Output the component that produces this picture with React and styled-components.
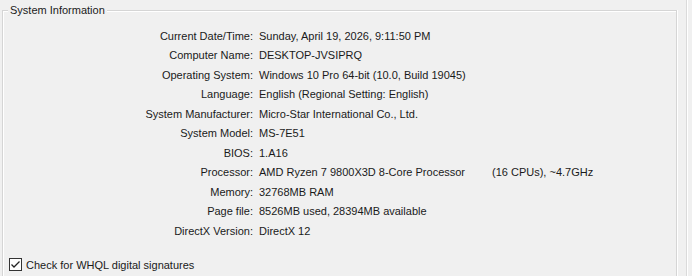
import React from "react";
import styled, { createGlobalStyle } from "styled-components";

const Global = createGlobalStyle`
  html, body { margin: 0; padding: 0; background: #f0f0f0; }
  body { font-family: "Liberation Sans", Arial, sans-serif; font-size: 11px; color: #000; }
`;

const Page = styled.div`
  width: 692px;
  height: 276px;
  overflow: hidden;
  display: flex;
  background: #f0f0f0;
`;

const Main = styled.div`
  width: 677px;
  padding: 10px 0 0 2px;
  box-sizing: border-box;
  position: relative;
`;

const Edge = styled.div`
  margin-left: 9px;
  width: 2px;
  border-left: 1px solid #dadada;
  border-right: 1px solid #ffffff;
  box-sizing: border-box;
`;

const Group = styled.div`
  margin: 0;
  padding: 15px 0 0 0;
  height: 300px;
  box-sizing: border-box;
  border-top: 1px solid #d5d5d5;
  border-left: 1px solid #d5d5d5;
  border-right: 1px solid #d5d5d5;
  box-shadow: inset 1px 1px 0 #ffffff, 1px 0 0 #ffffff;
  position: relative;
`;

const Legend = styled.span`
  position: absolute;
  left: 5px;
  top: -8px;
  padding: 0 2px;
  background: #f0f0f0;
  line-height: 14px;
  color: #1a1a1a;
`;

const Grid = styled.div`
  display: grid;
  grid-template-columns: 250px auto;
  column-gap: 6px;
  grid-auto-rows: 19.5px;
  align-items: center;
`;

const Label = styled.div`
  text-align: right;
  white-space: nowrap;
  color: #1a1a1a;
`;

const Value = styled.div`
  white-space: nowrap;
  color: #1a1a1a;
  display: flex;
`;

const Part = styled.span`
  min-width: ${(p) => (p.$width ? `${p.$width}px` : "0")};
`;

const CheckRow = styled.label`
  position: absolute;
  left: 9px;
  top: 258px;
  display: flex;
  align-items: center;
  gap: 4px;
  color: #1a1a1a;
`;

const Box = styled.span`
  width: 13px;
  height: 13px;
  box-sizing: border-box;
  border: 1px solid #333;
  background: #fff;
  display: flex;
  align-items: center;
  justify-content: center;
`;

const rows = [
  ["Current Date/Time:", "Sunday, April 19, 2026, 9:11:50 PM"],
  ["Computer Name:", "DESKTOP-JVSIPRQ"],
  ["Operating System:", "Windows 10 Pro 64-bit (10.0, Build 19045)"],
  ["Language:", "English (Regional Setting: English)"],
  ["System Manufacturer:", "Micro-Star International Co., Ltd."],
  ["System Model:", "MS-7E51"],
  ["BIOS:", "1.A16"],
  ["Processor:", "AMD Ryzen 7 9800X3D 8-Core Processor", "(16 CPUs), ~4.7GHz"],
  ["Memory:", "32768MB RAM"],
  ["Page file:", "8526MB used, 28394MB available"],
  ["DirectX Version:", "DirectX 12"],
];

export default function App() {
  return (
    <Page>
      <Global />
      <Main>
        <Group>
          <Legend>System Information</Legend>
          <Grid>
            {rows.map(([l, v, x]) => (
              <React.Fragment key={l}>
                <Label>{l}</Label>
                <Value>
                  <Part $width={x ? 233 : 0}>{v}</Part>
                  {x && <Part>{x}</Part>}
                </Value>
              </React.Fragment>
            ))}
          </Grid>
        </Group>
        <CheckRow>
          <Box>
            <svg width="11" height="11" viewBox="0 0 11 11">
              <path d="M1.5 5.5 L4 8 L9.5 2.5" fill="none" stroke="#222" strokeWidth="1.3" />
            </svg>
          </Box>
          Check for WHQL digital signatures
        </CheckRow>
      </Main>
      <Edge />
    </Page>
  );
}
